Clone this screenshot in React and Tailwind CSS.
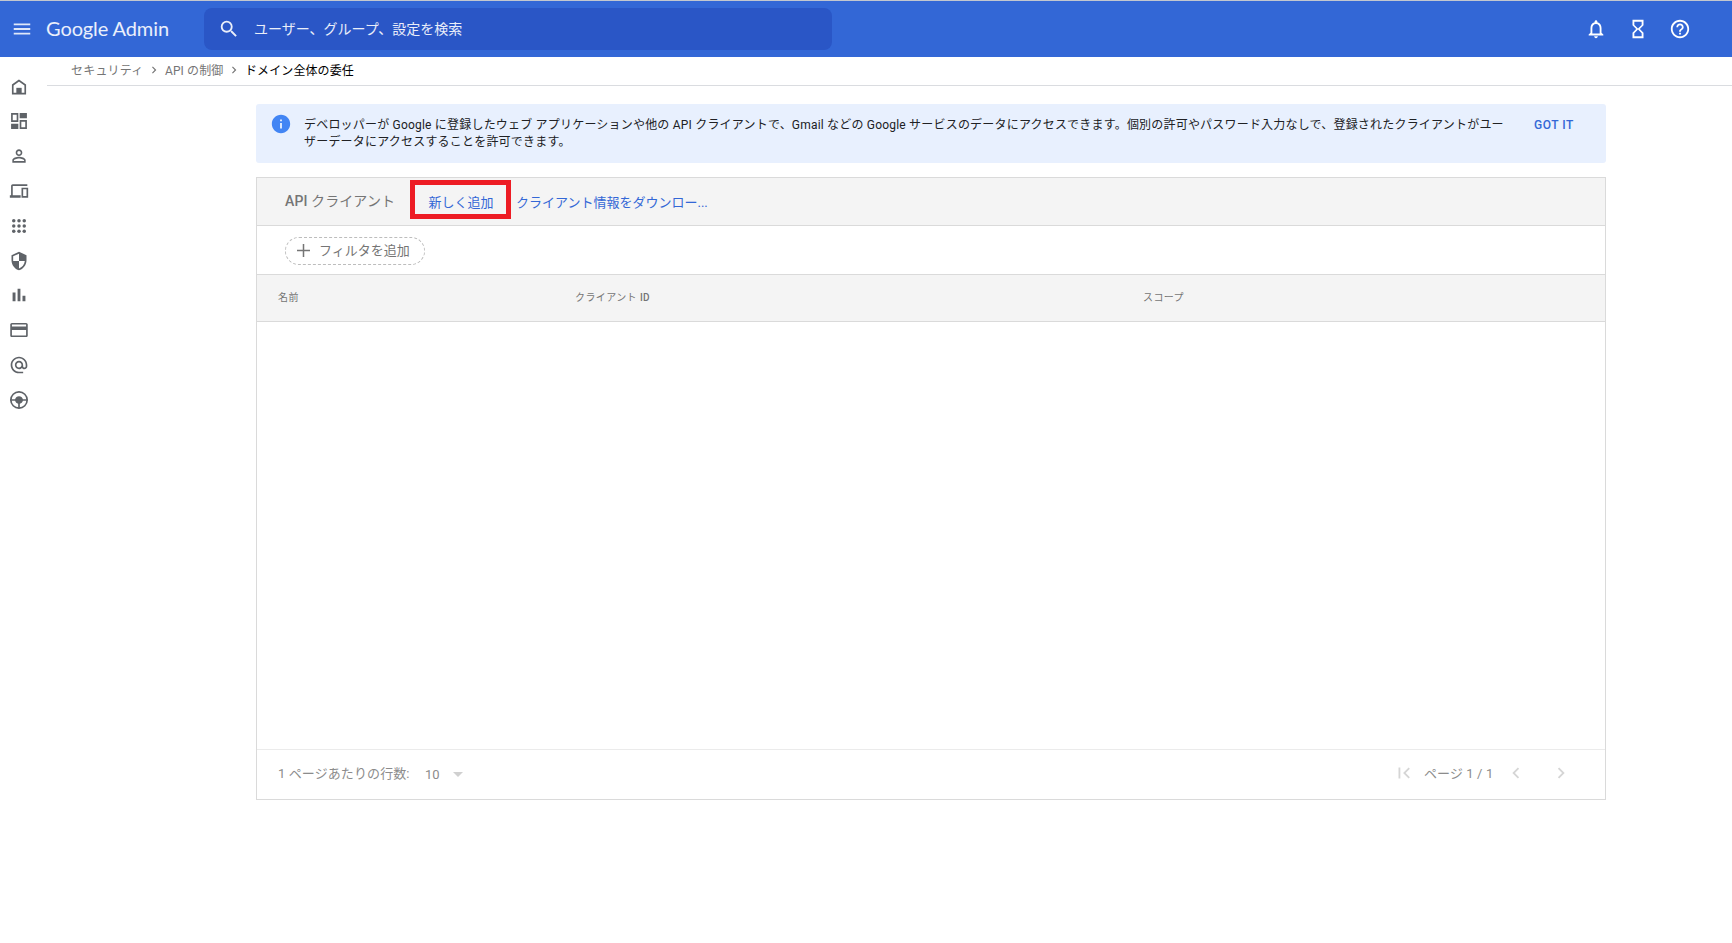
import {
  MdAlternateEmail,
  MdArrowDropDown,
  MdChevronLeft,
  MdChevronRight,
  MdFirstPage,
  MdHelpOutline,
  MdHourglassEmpty,
  MdInfo,
  MdMenu,
  MdNotificationsNone,
  MdPersonOutline,
  MdSearch,
  MdSecurity,
} from "react-icons/md";

function Icon({ children }) {
  return (
    <svg viewBox="0 0 24 24" className="size-5" fill="currentColor">
      {children}
    </svg>
  );
}

const HomeIcon = () => (
  <Icon>
    <path d="M12 4.2 4.5 9.6V20h15V9.6L12 4.2z" fill="none" stroke="currentColor" strokeWidth="2" />
    <path d="M8.8 13h6.4v7H8.8z" />
  </Icon>
);

const DashboardIcon = () => (
  <Icon>
    <path d="M3.5 3.5h6.7v8.7H3.5zM13.8 11.8h6.7v8.7h-6.7z" fill="none" stroke="currentColor" strokeWidth="2" />
    <path d="M12.8 2.5h8.7v6.3h-8.7zM2.5 15.2h8.7v6.3H2.5z" />
  </Icon>
);

const DevicesIcon = () => (
  <Icon>
    <path d="M4.5 6H22V4H4.5c-1.1 0-2 .9-2 2v11H1v3h13v-3H4.5V6z" />
    <path d="M16 9h6v10h-6z" fill="none" stroke="currentColor" strokeWidth="2" />
  </Icon>
);

const AppsIcon = () => (
  <Icon>
    {[5.7, 12, 18.3].map((y) =>
      [5.7, 12, 18.3].map((x) => <circle key={`${x}-${y}`} cx={x} cy={y} r="2.1" />)
    )}
  </Icon>
);

const ReportIcon = () => (
  <Icon>
    <path d="M4.3 9h3.5v10.5H4.3zM10.3 4.5h3.4v15h-3.4zM16.2 13h3.5v6.5h-3.5z" />
  </Icon>
);

const BillingIcon = () => (
  <Icon>
    <path
      fillRule="evenodd"
      d="M20.5 3.5h-17c-1.1 0-2 .9-2 2v13c0 1.1.9 2 2 2h17c1.1 0 2-.9 2-2v-13c0-1.1-.9-2-2-2zM3.5 5.5h17v2.4h-17zM3.5 12h17v6.5h-17z"
    />
  </Icon>
);

const WheelIcon = () => (
  <Icon>
    <circle cx="12" cy="12" r="9.8" fill="none" stroke="currentColor" strokeWidth="2" />
    <path d="M2 11h5.3c.8-2.2 2.3-3.5 4.7-3.5s3.9 1.3 4.7 3.5H22v2h-5.3c-.6 1.8-1.8 3-3.7 3.6V22h-2v-5.4c-1.9-.6-3.1-1.8-3.7-3.6H2z" />
  </Icon>
);

const navItems = [
  HomeIcon,
  DashboardIcon,
  MdPersonOutline,
  DevicesIcon,
  AppsIcon,
  MdSecurity,
  ReportIcon,
  BillingIcon,
  MdAlternateEmail,
  WheelIcon,
];

function Header() {
  return (
    <header className="flex h-[57px] items-center border-t border-[#c3c7cf] bg-[#3367d6] text-white">
      <MdMenu className="ml-[11px] size-[22px] shrink-0 text-white/85" />
      <div className="ml-[13px] w-[158px] shrink-0 whitespace-nowrap pb-[2px] font-['Lato'] text-[20px] leading-none tracking-[-0.1px] text-white/90">
        Google Admin
      </div>
      <div className="flex h-[42px] w-[628px] items-center rounded-lg bg-[#2a56c6] pl-[14px] text-white/90">
        <MdSearch className="size-[22px]" />
        <span className="ml-[14px] text-sm">ユーザー、グループ、設定を検索</span>
      </div>
      <div className="ml-auto mr-[41.5px] flex gap-5">
        <MdNotificationsNone className="size-[22px]" />
        <MdHourglassEmpty className="size-[22px]" />
        <MdHelpOutline className="size-[22px]" />
      </div>
    </header>
  );
}

function Sidebar() {
  return (
    <nav className="flex w-[47px] shrink-0 flex-col gap-[14.8px] pl-[8.5px] pt-[19.6px] text-[#5f6368]">
      {navItems.map((Item, index) => (
        <Item key={index} className="size-5" />
      ))}
    </nav>
  );
}

function Breadcrumbs() {
  return (
    <div className="flex h-[29px] items-center border-b border-[#dadce0] pl-6 text-xs text-[#757575]">
      <span className="w-[76px] tracking-[0.2px]">セキュリティ</span>
      <MdChevronRight className="mb-[2px] mr-1 size-3.5" />
      <span className="w-[59px] tracking-[0.1px]">API の制御</span>
      <MdChevronRight className="mb-[2px] ml-[3px] mr-1 size-3.5" />
      <span className="tracking-[0.1px] text-black">ドメイン全体の委任</span>
    </div>
  );
}

function Banner() {
  return (
    <div className="flex h-[59px] rounded-[3px] bg-[#e8f0fe] pt-[12px] text-xs leading-[17px] text-[#202124]">
      <MdInfo className="-mt-[3px] ml-[14px] size-[22px] shrink-0 text-[#4285f4]" />
      <p className="ml-3 w-[1210px] whitespace-nowrap pt-[1px] tracking-[0.2px]">
        デベロッパーが Google に登録したウェブ アプリケーションや他の API クライアントで、Gmail などの Google
        サービスのデータにアクセスできます。個別の許可やパスワード入力なしで、登録されたクライアントがユー
        <br />
        ザーデータにアクセスすることを許可できます。
      </p>
      <button className="ml-[20px] h-[17px] whitespace-nowrap pt-[1px] font-medium tracking-[0.5px] text-[#3367d6]">
        GOT IT
      </button>
    </div>
  );
}

function ClientTable() {
  return (
    <section className="mt-[14px] h-[623px] border border-[#dadada] text-[13px] text-[#757575]">
      {/* Title + actions */}
      <div className="flex h-12 items-start border-b border-[#dadada] bg-[#f4f4f4] pl-7">
        <h2 className="w-[125px] pt-[13px] text-sm font-medium tracking-[0.1px]">
          API <span className="font-normal">クライアント</span>
        </h2>
        <button className="mt-[2px] h-[39px] w-[101px] border-[5px] border-[#ed1c24] pl-[1px] pt-[6px] text-[#3367d6]">
          新しく追加
        </button>
        <button className="ml-[5px] pt-[15px] text-[#3367d6]">クライアント情報をダウンロー...</button>
      </div>

      {/* Filter */}
      <div className="flex h-[49px] items-center border-b border-[#dadada] pl-7 pt-[2px]">
        <button className="flex h-7 w-[140px] items-center rounded-full border border-dashed border-[#bdbdbd] pb-[1px] pl-[11px]">
          <svg viewBox="0 0 13 13" className="size-[13px]">
            <path d="M6.5 0v13M0 6.5h13" stroke="currentColor" strokeWidth="1.5" />
          </svg>
          <span className="ml-[9px]">フィルタを追加</span>
        </button>
      </div>

      {/* Column names */}
      <div className="flex h-[47px] items-center border-b border-[#dadada] bg-[#f4f4f4] pb-[2px] pl-[21px] text-[10px] tracking-[0.4px]">
        <span className="w-[297px]">名前</span>
        <span className="w-[568px]">
          クライアント <span className="font-medium">ID</span>
        </span>
        <span>スコープ</span>
      </div>

      <div className="h-[428px] border-b border-[#ebebeb]" />

      {/* Paging */}
      <div className="flex h-[49px] items-center pb-[3px] pl-[21px] text-[#8c8c8c]">
        <span className="w-[147px] pt-px tracking-[0.1px]">1 ページあたりの行数:</span>
        <span className="pt-[3px]">10</span>
        <MdArrowDropDown className="ml-[6px] mt-px size-6 text-[#d0d0d0]" />
        <MdFirstPage className="ml-auto mr-[9px] size-[22px] text-[#d5d5d5]" />
        <span className="w-[81px] pt-px tracking-[0.1px]">ページ 1 / 1</span>
        <MdChevronLeft className="size-[22px] text-[#d5d5d5]" />
        <MdChevronRight className="ml-[23px] mr-[33px] size-[22px] text-[#d5d5d5]" />
      </div>
    </section>
  );
}

export default function App() {
  return (
    <div className="h-[943px] w-[1732px] overflow-hidden bg-white font-['Roboto','Noto_Sans_CJK_JP',sans-serif]">
      <Header />
      <div className="flex">
        <Sidebar />
        <main className="flex-1">
          <Breadcrumbs />
          <div className="ml-[209px] mt-[18px] w-[1350px]">
            <Banner />
            <ClientTable />
          </div>
        </main>
      </div>
    </div>
  );
}
